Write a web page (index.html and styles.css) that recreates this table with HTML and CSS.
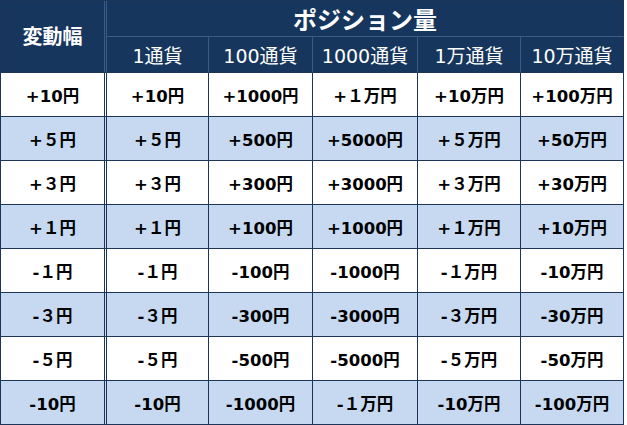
FILE: index.html
```html
<!DOCTYPE html>
<html lang="ja">
<head>
<meta charset="utf-8">
<title>ポジション量</title>
<link rel="stylesheet" href="styles.css">
</head>
<body>
<table class="grid">
  <colgroup>
    <col class="c0"><col class="c1"><col class="c2"><col class="c3"><col class="c4"><col class="c5">
  </colgroup>
  <thead>
    <tr class="h1">
      <th class="range" rowspan="2">変動幅</th>
      <th class="title" colspan="5">ポジション量</th>
    </tr>
    <tr class="h2">
      <th class="sub">1通貨</th>
      <th class="sub">100通貨</th>
      <th class="sub">1000通貨</th>
      <th class="sub">1万通貨</th>
      <th class="sub last">10万通貨</th>
    </tr>
  </thead>
  <tbody>
    <tr class="odd"><td class="first">+10円</td><td>+10円</td><td>+1000円</td><td>+１万円</td><td>+10万円</td><td>+100万円</td></tr>
    <tr class="even"><td class="first">+５円</td><td>+５円</td><td>+500円</td><td>+5000円</td><td>+５万円</td><td>+50万円</td></tr>
    <tr class="odd"><td class="first">+３円</td><td>+３円</td><td>+300円</td><td>+3000円</td><td>+３万円</td><td>+30万円</td></tr>
    <tr class="even"><td class="first">+１円</td><td>+１円</td><td>+100円</td><td>+1000円</td><td>+１万円</td><td>+10万円</td></tr>
    <tr class="odd"><td class="first">-１円</td><td>-１円</td><td>-100円</td><td>-1000円</td><td>-１万円</td><td>-10万円</td></tr>
    <tr class="even"><td class="first">-３円</td><td>-３円</td><td>-300円</td><td>-3000円</td><td>-３万円</td><td>-30万円</td></tr>
    <tr class="odd"><td class="first">-５円</td><td>-５円</td><td>-500円</td><td>-5000円</td><td>-５万円</td><td>-50万円</td></tr>
    <tr class="even"><td class="first">-10円</td><td>-10円</td><td>-1000円</td><td>-１万円</td><td>-10万円</td><td>-100万円</td></tr>
  </tbody>
</table>
</body>
</html>
```
FILE: styles.css
```css
html, body {
  margin: 0;
  padding: 0;
  background: #ffffff;
}

.grid {
  border-collapse: separate;
  border-spacing: 0;
  table-layout: fixed;
  width: 624px;
  border-left: 1px solid #1d3559;
  border-top: 1px solid #1d3559;
  font-family: "DejaVu Sans", "Noto Sans CJK JP", sans-serif;
}

.c0 { width: 106px; }
.c1 { width: 102px; }
.c2 { width: 104px; }
.c3 { width: 105px; }
.c4 { width: 103px; }
.c5 { width: 103px; }

.grid th,
.grid td {
  padding: 0;
  text-align: center;
  vertical-align: middle;
  white-space: nowrap;
  overflow: hidden;
}

.grid th {
  background: #17365d;
  color: #ffffff;
  border-right: 1px solid #3d5b88;
  border-bottom: 1px solid #3d5b88;
}

.grid td {
  color: #000000;
  font-size: 16.5px;
  font-weight: bold;
  border-right: 1px solid #1d3559;
  border-bottom: 1px solid #1d3559;
}

.h1 { height: 35px; }
.h2 { height: 36px; }
tbody tr { height: 44px; }

.range {
  font-family: "Noto Sans CJK JP", sans-serif;
  font-size: 20px;
  font-weight: bold;
  border-right: 3px double #3d5b88 !important;
  border-bottom-color: #1d3559 !important;
  padding-bottom: 2px !important;
}

.title {
  font-family: "Noto Sans CJK JP", sans-serif;
  font-size: 24px;
  font-weight: bold;
  border-right-color: #1d3559 !important;
}

.sub {
  font-size: 19px;
  font-weight: normal;
  border-bottom-color: #1d3559 !important;
}

.sub.last {
  border-right-color: #1d3559 !important;
}

.grid td.first {
  border-right: 3px double #1d3559;
}

.odd td { background: #ffffff; }
.even td { background: #c6d9f1; }
```
